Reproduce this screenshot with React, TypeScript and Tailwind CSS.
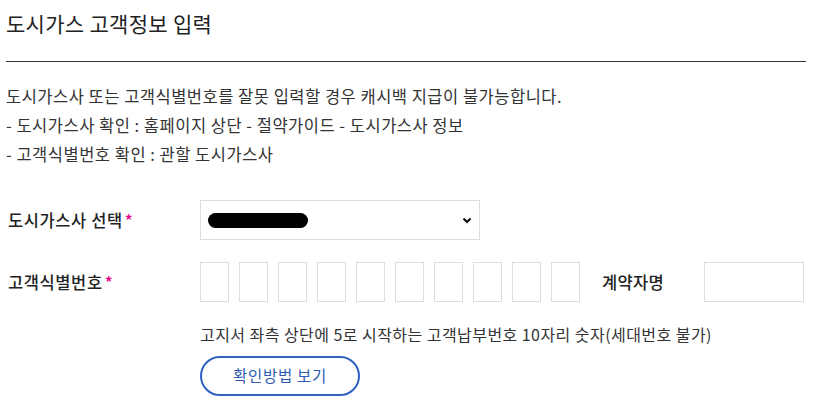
export default function App() {
  const boxes = Array.from({ length: 10 }, (_, i) => i);

  return (
    <div
      className="w-[821px] h-[405px] bg-white pl-[6px] text-[#333]"
      style={{ fontFamily: '"Noto Sans CJK KR", "Noto Sans", sans-serif' }}
    >
      <h2 className="w-[800px] pt-[9px] pb-[24px] text-[21px] leading-[28px] tracking-[0.3px] font-normal text-[#222] border-b border-[#333]">
        도시가스 고객정보 입력
      </h2>

      <div className="mt-[20px] text-[16.5px] leading-[29px] tracking-[0.5px]">
        <p>도시가스사 또는 고객식별번호를 잘못 입력할 경우 캐시백 지급이 불가능합니다.</p>
        <p>- 도시가스사 확인 : 홈페이지 상단 - 절약가이드 - 도시가스사 정보</p>
        <p>- 고객식별번호 확인 : 관할 도시가스사</p>
      </div>

      <div className="mt-[31px] flex items-center h-[40px]">
        <label className="w-[194px] pl-[2px] text-[16.5px] tracking-[0.6px] font-medium text-[#222]">
          도시가스사 선택<span className="text-[#e6007e] ml-[2px]">*</span>
        </label>
        <div className="w-[280px] h-[40px] border border-[#ddd] flex items-center justify-between pl-[7px] pr-[7px]">
          <div className="w-[100px] h-[15px] rounded-full bg-black" />
          <svg width="10" height="7" viewBox="0 0 10 7">
            <polyline points="1.5,1.5 5,5 8.5,1.5" fill="none" stroke="#111" strokeWidth="2.2" />
          </svg>
        </div>
      </div>

      <div className="mt-[22px] flex items-center h-[40px]">
        <label className="w-[194px] pl-[2px] text-[16.5px] tracking-[0.6px] font-medium text-[#222]">
          고객식별번호<span className="text-[#e6007e] ml-[2px]">*</span>
        </label>
        <div className="flex gap-[10px]">
          {boxes.map((i) => (
            <div key={i} className="w-[29px] h-[40px] border border-[#ddd]" />
          ))}
        </div>
        <span className="ml-[22px] w-[102px] text-[16.5px] tracking-[0.3px] font-medium text-[#222]">계약자명</span>
        <div className="w-[100px] h-[40px] border border-[#ddd]" />
      </div>

      <p className="ml-[194px] mt-[21px] text-[16px] leading-[22px] tracking-[0.45px]">
        고지서 좌측 상단에 5로 시작하는 고객납부번호 10자리 숫자(세대번호 불가)
      </p>

      <button className="ml-[194px] mt-[11px] w-[160px] h-[40px] rounded-full border-2 border-[#2f62c0] text-[#2f5bb0] text-[15.5px] tracking-[0.7px] bg-white">
        확인방법 보기
      </button>
    </div>
  );
}
